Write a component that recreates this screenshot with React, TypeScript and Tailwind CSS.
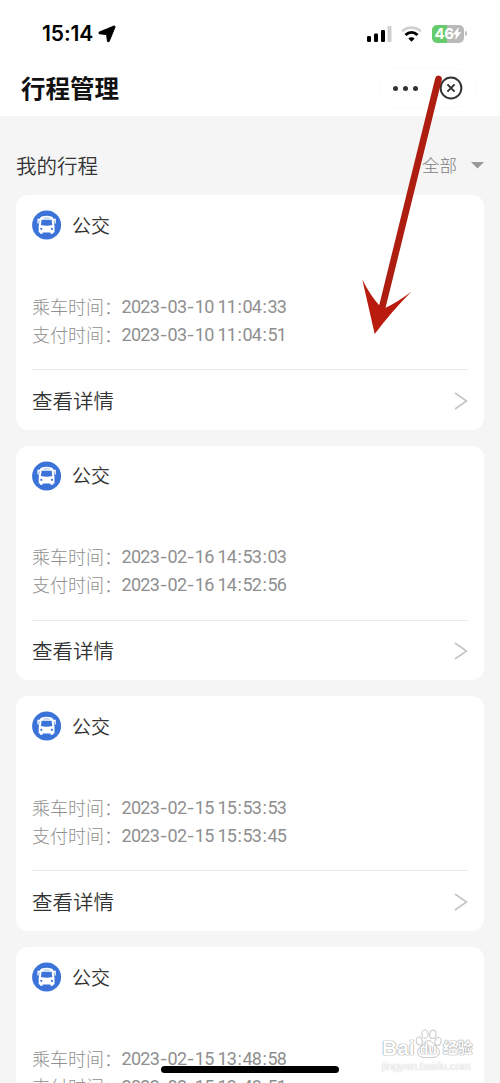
import React from 'react';

interface Trip {
  id: number;
  ride: string;
  pay: string;
}

const TRIPS: Trip[] = [
  { id: 1, ride: '2023-03-10 11:04:33', pay: '2023-03-10 11:04:51' },
  { id: 2, ride: '2023-02-16 14:53:03', pay: '2023-02-16 14:52:56' },
  { id: 3, ride: '2023-02-15 15:53:53', pay: '2023-02-15 15:53:45' },
  { id: 4, ride: '2023-02-15 13:48:58', pay: '2023-02-15 13:48:51' },
];

const StatusBar = () => (
  <div className="flex h-[60px] items-center justify-between pl-[42px] pr-[33px] pt-[7px]">
    <div className="flex items-center gap-[6px]">
      <span className="font-['Inter','Liberation_Sans',sans-serif] text-[21px] font-semibold leading-6 tracking-[-0.1px] text-black">15:14</span>
      <svg className="-ml-px" width="18" height="18" viewBox="0 0 18 18">
        <path d="M16.200.9 1 7.200v1.500l7.600.9.900 7h1.600L17.200 1.700Z" fill="#000" stroke="#000" strokeWidth="1" strokeLinejoin="round" />
      </svg>
    </div>
    <div className="flex items-center">
      <svg width="25" height="16" viewBox="0 0 25 16">
        <rect x="0" y="10" width="4" height="6" rx="1.2" />
        <rect x="7" y="7.5" width="4" height="8.5" rx="1.2" />
        <rect x="14" y="4" width="4" height="12" rx="1.2" />
        <rect x="20.5" y="0" width="4" height="16" rx="1.2" fill="#cfcfcf" />
      </svg>
      <svg className="ml-[9px]" width="21" height="16" viewBox="0 0 21 16">
        <path d="M1.2 5.2C6.6.4 14.4.4 19.8 5.2" fill="none" stroke="#cfcfcf" strokeWidth="2.8" />
        <path d="M4.5 9c3.6-3.400 8.400-3.400 12 0" fill="none" stroke="#000" strokeWidth="3" />
        <path d="M7.300 12.400c1.900-1.700 4.500-1.700 6.400 0l-3.200 3.300Z" />
      </svg>
      <div className="ml-[10px] flex h-[18px] w-[32px] items-center justify-center rounded-[5px] bg-[linear-gradient(90deg,#66cb6d_0_47%,#b9b9b9_47%)] text-white">
        <span className="font-['Inter','Liberation_Sans',sans-serif] text-[15px] font-bold leading-none tracking-[-0.5px]">46</span>
        <svg width="8" height="13" viewBox="0 0 8 12">
          <path d="M5.4.3.3 6.8h3L2.600 11.700l5-6.600H4.700Z" fill="#fff" stroke="#fff" strokeWidth=".6" />
        </svg>
      </div>
      <div className="ml-px h-[5px] w-[2px] rounded-r-full bg-[#bdbdbd]" />
    </div>
  </div>
);

const NavBar = () => (
  <div className="flex h-14 items-center justify-between pl-[21px] pr-6">
    <h1 className="text-[24.5px] font-bold leading-none text-[#111]">行程管理</h1>
    <div className="flex h-10 w-[98px] items-center rounded-full border border-[#fbfbfb] pl-[14px]">
      <div className="flex gap-[5px]">
        <span className="size-[5px] rounded-full bg-[#333]" />
        <span className="size-[5px] rounded-full bg-[#333]" />
        <span className="size-[5px] rounded-full bg-[#333]" />
      </div>
      <svg className="ml-[21px] shrink-0" width="24" height="24" viewBox="0 0 24 24" fill="none" stroke="#333">
        <circle cx="12" cy="12" r="10.400" strokeWidth="2" />
        <path d="m8.400 8.400 7.200 7.200m0-7.200-7.200 7.200" strokeWidth="2" />
      </svg>
    </div>
  </div>
);

const BusIcon = () => (
  <svg width="30" height="30" viewBox="0 0 30 30">
    <circle cx="14.600" cy="15" r="14.500" fill="#3b73d8" />
    <path d="M10 6.500c2.700-1 6.500-1 9.200 0 1.300.400 2 1.200 2.300 2.300h2.300v4.700h-1.300V10.500h-.800l.800 5.500v6.500h-1.300v1.300h-2.700v-1.300h-7.800v1.300H8v-1.300H6.700V16l.800-5.500h-.800v3H5.400V8.800h2.300c.3-1.100 1-1.900 2.300-2.300Z" fill="#fff" />
    <path d="M9.600 9.700h10l.700 5.300c-3.600 1-7.800 1-11.400 0Z" fill="#3b73d8" />
    <path d="M11.600 8h6" stroke="#8fb1ec" strokeWidth=".9" />
    <circle cx="9.300" cy="18.800" r="1.100" fill="#3b73d8" />
    <circle cx="19.900" cy="18.800" r="1.100" fill="#3b73d8" />
  </svg>
);

// digits are set tight, separators a little wider
const Stamp = ({ value }: { value: string }) => (
  <span className="whitespace-pre font-['Roboto','Liberation_Sans',sans-serif] text-[18px] tracking-[-0.7px]">
    {value.split(/([-:])/).map((part, i) => {
      if (part === '-') return <span key={i} className="inline-block w-[8.4px] scale-x-125 text-center">-</span>;
      if (part === ':') return <span key={i} className="inline-block w-[6.2px] text-center">:</span>;
      return <span key={i}>{part}</span>;
    })}
  </span>
);

const TimeRow = ({ label, value }: { label: string; value: string }) => (
  <div className="flex h-7 items-center text-[#8f8f8f]">
    <span className="w-[89.5px] whitespace-nowrap text-[18px] font-light">{label}：</span>
    <Stamp value={value} />
  </div>
);

const TripCard = ({ trip }: { trip: Trip }) => (
  <div className="h-[234.7px] shrink-0 rounded-xl bg-white px-4">
    <div className="flex h-[60px] items-center gap-[10px]">
      <BusIcon />
      <span className="text-[19px] font-[350] text-[#333]">公交</span>
    </div>
    <div className="mt-[37px] h-[78px] border-b border-[#ebebeb]">
      <TimeRow label="乘车时间" value={trip.ride} />
      <TimeRow label="支付时间" value={trip.pay} />
    </div>
    <div className="flex h-[60px] items-center justify-between">
      <span className="text-[20.5px] font-[350] text-[#333]">查看详情</span>
      <svg className="mt-px" width="14" height="18" viewBox="0 0 14 18" fill="none" stroke="#c4c4c4" strokeWidth="1.6">
        <path d="M1 1 12.500 9 1 17" />
      </svg>
    </div>
  </div>
);

const Pointer = () => (
  <svg className="absolute left-[355px] top-[70px]" width="95" height="270" viewBox="355 70 95 270">
    <path d="M438.500 79 382 308" stroke="#ad1d10" strokeWidth="6.800" strokeLinecap="round" />
    <path d="M374.700 334 362.300 279.500Q370 295 379 305L385 308Q398 302 411.500 291.500Q392 311 374.700 334Z" fill="#b91c0e" />
  </svg>
);

const Watermark = () => (
  <div className="absolute left-[382px] top-[1028px] w-[96px] text-white">
    <div className="flex h-[31px] items-end [text-shadow:0_0_1px_#999,0_0_1px_#999,0_0_1px_#aaa]">
      <span className="font-['Liberation_Sans',sans-serif] text-[21px] font-bold leading-[22px]">Bai</span>
      <div className="relative h-[31px] w-[27px]">
        <svg width="27" height="31" viewBox="0 0 26 31" fill="#fff" stroke="#c6c6c6" strokeWidth="1">
          <ellipse cx="3.800" cy="13" rx="3" ry="4" transform="rotate(-15 3.800 13)" />
          <ellipse cx="9.500" cy="6" rx="3.100" ry="4.200" />
          <ellipse cx="17.400" cy="6.300" rx="3.100" ry="4.200" transform="rotate(10 17.400 6.300)" />
          <ellipse cx="22.500" cy="13.500" rx="3" ry="4" transform="rotate(15 22.500 13.500)" />
          <path d="M13 12.500c3.500 0 4 3 7 5.500s4.800 4.500 3.500 8-5 3.500-10.500 3.500-9.200 0-10.500-3.500S3 20.500 6 18s3.500-5.500 7-5.500Z" />
        </svg>
        <span className="absolute left-[5px] top-[14px] font-['Liberation_Sans',sans-serif] text-[14px] font-bold leading-[14px]">du</span>
      </div>
      <span className="pl-px text-[15px] font-bold leading-[24px]">经验</span>
    </div>
    <div className="mt-px font-['Liberation_Sans',sans-serif] text-[11px] leading-3 [text-shadow:0_0_1px_#aaa]">jingyan.baidu.com</div>
  </div>
);

const App: React.FC = () => (
  <div className="relative flex h-[1083px] w-[500px] flex-col overflow-hidden bg-[#f5f5f5] font-['Noto_Sans_CJK_SC',sans-serif]">
    <header className="h-[116px] shrink-0 bg-white">
      <StatusBar />
      <NavBar />
    </header>

    <main className="px-4">
      <div className="flex h-[79px] items-center justify-between pt-[19px]">
        <h2 className="text-[20.5px] font-[350] text-[#333]">我的行程</h2>
        <button className="flex items-center gap-[14px] text-[17.5px] font-light text-[#808080]">
          全部
          <svg width="13" height="7" viewBox="0 0 13 7">
            <path d="M0 0h13L6.500 6.500Z" fill="#999" />
          </svg>
        </button>
      </div>
      <div className="flex flex-col gap-4">
        {TRIPS.map(trip => (
          <TripCard key={trip.id} trip={trip} />
        ))}
      </div>
    </main>

    <Pointer />
    <Watermark />
    <div className="absolute left-[161px] top-[1066px] h-[7px] w-[178px] rounded-full bg-black" />
  </div>
);

export default App;
